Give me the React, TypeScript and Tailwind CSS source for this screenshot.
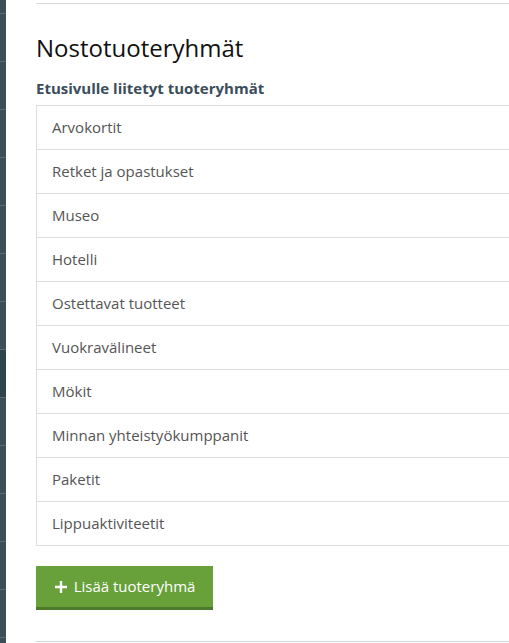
import React from "react";

const groups = [
  "Arvokortit",
  "Retket ja opastukset",
  "Museo",
  "Hotelli",
  "Ostettavat tuotteet",
  "Vuokravälineet",
  "Mökit",
  "Minnan yhteistyökumppanit",
  "Paketit",
  "Lippuaktiviteetit",
];

const navItems = Array.from({ length: 13 }, (_, i) => i);

export default function App() {
  return (
    <div
      className="flex w-[509px] h-[643px] overflow-hidden bg-white"
      style={{ fontFamily: '"Open Sans", "Noto Sans", sans-serif' }}
    >
      {/* collapsed side nav */}
      <div className="w-[6px] shrink-0 bg-[#3d4e58] flex flex-col">
        <div className="h-[14px] shrink-0 border-b border-[#5b6b74]" />
        {navItems.map((i) => (
          <div
            key={i}
            className={
              i === 7
                ? "h-[48px] shrink-0 border-b border-[#5b6b74] bg-[#2f434d]"
                : "h-[48px] shrink-0 border-b border-[#5b6b74]"
            }
          />
        ))}
      </div>

      <div className="flex-1 min-w-0 pl-[30px] pt-[3px]">
        <div className="border-t border-[#d9dcdd]" />

        <h2 className="mt-[29px] text-[24px] leading-[30px] font-normal text-[#111]">
          Nostotuoteryhmät
        </h2>

        <h4 className="mt-[15px] text-[15px] leading-[20px] font-bold text-[#3b4d5b]">
          Etusivulle liitetyt tuoteryhmät
        </h4>

        <ul className="mt-[7px] w-[520px] border border-[#dddddd]">
          {groups.map((g, i) => (
            <li
              key={g}
              className={
                i === 0
                  ? "h-[43px] flex items-center px-[15px] text-[15px] text-[#555]"
                  : "h-[44px] flex items-center px-[15px] text-[15px] text-[#555] border-t border-[#dddddd]"
              }
            >
              {g}
            </li>
          ))}
        </ul>

        <button className="mt-[20px] h-[44px] w-[177px] flex items-center justify-center gap-[6px] bg-[#68a13a] border-b-[3px] border-[#4c7a2a] text-white text-[15px]">
          <svg width="14" height="14" viewBox="0 0 14 14" className="mt-[1px]">
            <path d="M7 1v12M1 7h12" stroke="white" strokeWidth="2.4" />
          </svg>
          Lisää tuoteryhmä
        </button>

        <div className="mt-[31px] border-t border-[#cfd8dd]" />
      </div>
    </div>
  );
}
